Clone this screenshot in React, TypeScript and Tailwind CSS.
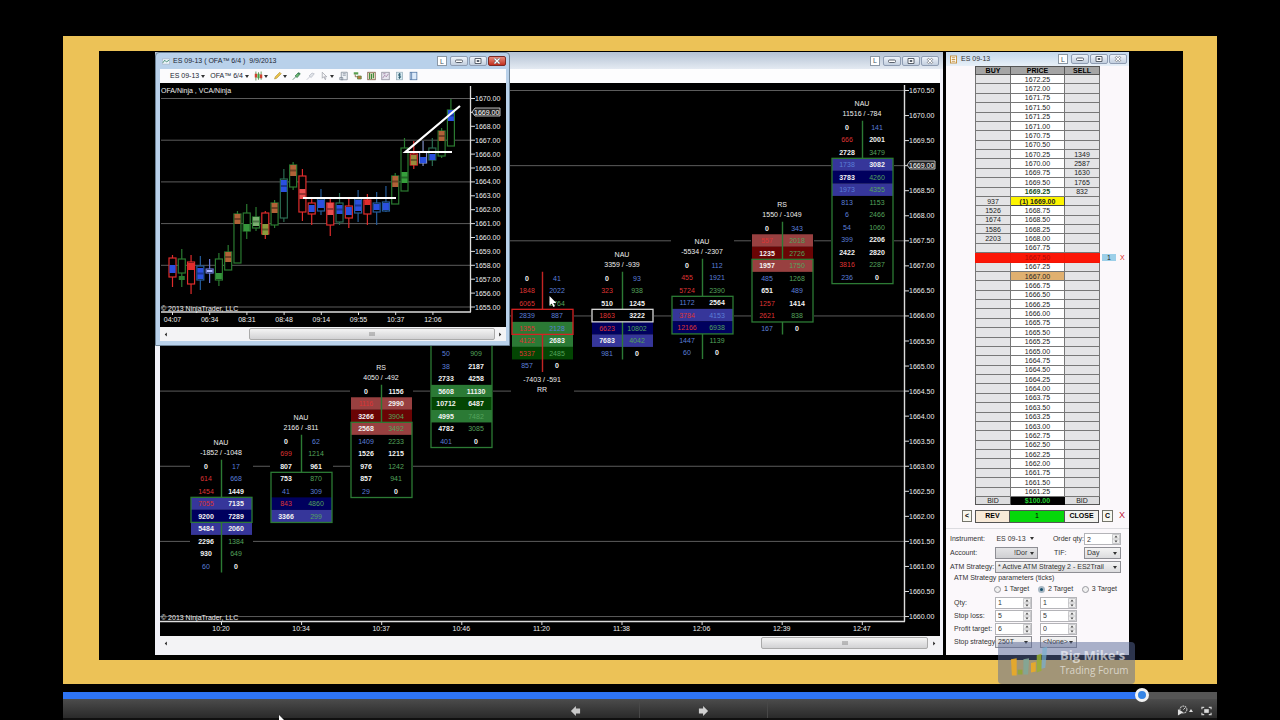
import type { ReactNode } from "react";

type Ink = "w" | "r" | "b" | "g";
type Fill = "blue" | "navy" | "rose" | "maroon" | "green" | "forest";
type Row = [string, Ink, string, Ink, Fill?];

interface Footprint {
  x: number;
  top: number;
  title?: [string, string];
  footer?: [string, string];
  line: string;
  boxColor: string;
  box: [number, number];
  rows: Row[];
}

const INK: Record<Ink, string> = { w: "#f2f2f2", r: "#de3434", b: "#5a7fd8", g: "#54a45c" };
const FILL: Record<Fill, string> = {
  blue: "#36369a",
  navy: "#00005e",
  rose: "#984040",
  maroon: "#6a0404",
  green: "#2b7a35",
  forest: "#034603",
};
const GREEN = "#2c7a34";
const STEP = 12.53;

const footprints: Footprint[] = [
  {
    x: 221, top: 466, title: ["NAU", "-1852 / -1048"], line: GREEN, boxColor: GREEN, box: [3, 4],
    rows: [
      ["0", "w", "17", "b"], ["614", "r", "668", "b"], ["1454", "r", "1449", "w"],
      ["7055", "r", "7135", "w", "blue"], ["9200", "w", "7289", "w", "navy"], ["5484", "w", "2060", "w", "blue"],
      ["2296", "w", "1384", "g"], ["930", "w", "649", "g"], ["60", "b", "0", "w"],
    ],
  },
  {
    x: 301, top: 441, title: ["NAU", "2166 / -811"], line: GREEN, boxColor: GREEN, box: [3, 6],
    rows: [
      ["0", "w", "62", "b"], ["699", "r", "1214", "g"], ["807", "w", "961", "w"], ["753", "w", "870", "g"],
      ["41", "b", "309", "b"], ["843", "r", "4860", "g", "navy"], ["3366", "w", "299", "g", "blue"],
    ],
  },
  {
    x: 381, top: 391, title: ["RS", "4050 / -492"], line: GREEN, boxColor: GREEN, box: [3, 8],
    rows: [
      ["0", "w", "1156", "w"], ["1116", "r", "2990", "w", "rose"], ["3266", "w", "3904", "g", "maroon"],
      ["2568", "w", "3492", "g", "rose"], ["1409", "b", "2233", "g"], ["1526", "w", "1215", "w"],
      ["976", "w", "1242", "g"], ["857", "w", "941", "g"], ["29", "b", "0", "w"],
    ],
  },
  {
    x: 461, top: 341, line: GREEN, boxColor: GREEN, box: [0, 8],
    rows: [
      ["12", "b", "310", "b"], ["50", "b", "909", "g"], ["38", "b", "2187", "w"], ["2733", "w", "4258", "w"],
      ["5608", "w", "11130", "w", "green"], ["10712", "w", "6487", "w", "forest"], ["4995", "w", "7482", "g", "green"],
      ["4782", "w", "3085", "g"], ["401", "b", "0", "w"],
    ],
  },
  {
    x: 542, top: 278, footer: ["-7403 / -591", "RR"], line: "#c42424", boxColor: "#d42222", box: [3, 4],
    rows: [
      ["0", "w", "41", "b"], ["1848", "r", "2022", "b"], ["6065", "r", "2764", "g"], ["2839", "b", "887", "b"],
      ["1355", "r", "2128", "b", "green"], ["4122", "r", "2683", "w", "green"], ["5337", "r", "2485", "g", "forest"],
      ["857", "b", "0", "w"],
    ],
  },
  {
    x: 622, top: 278, title: ["NAU", "3359 / -939"], line: GREEN, boxColor: "#d8d8d8", box: [3, 3],
    rows: [
      ["0", "w", "93", "b"], ["323", "r", "938", "g"], ["510", "w", "1245", "w"], ["1863", "r", "3222", "w"],
      ["6623", "r", "10802", "g", "navy"], ["7683", "w", "4042", "g", "blue"], ["981", "b", "0", "w"],
    ],
  },
  {
    x: 702, top: 265, title: ["NAU", "-5534 / -2307"], line: GREEN, boxColor: GREEN, box: [3, 5],
    rows: [
      ["0", "w", "112", "b"], ["455", "r", "1921", "b"], ["5724", "r", "2390", "g"], ["1172", "b", "2564", "w"],
      ["3784", "r", "4153", "b", "blue"], ["12166", "r", "6938", "g", "navy"], ["1447", "b", "1139", "g"],
      ["60", "b", "0", "w"],
    ],
  },
  {
    x: 782, top: 228, title: ["RS", "1550 / -1049"], line: GREEN, boxColor: GREEN, box: [3, 7],
    rows: [
      ["0", "w", "343", "b"], ["557", "r", "2018", "g", "rose"], ["1235", "w", "2726", "g", "maroon"],
      ["1957", "w", "1750", "g", "rose"], ["485", "b", "1268", "g"], ["651", "w", "489", "b"],
      ["1257", "r", "1414", "w"], ["2621", "r", "838", "g"], ["167", "b", "0", "w"],
    ],
  },
  {
    x: 862, top: 127, title: ["NAU", "11516 / -784"], line: GREEN, boxColor: GREEN, box: [3, 12],
    rows: [
      ["0", "w", "141", "b"], ["666", "r", "2001", "w"], ["2728", "w", "3479", "g"], ["1738", "b", "3082", "w", "blue"],
      ["3783", "w", "4260", "g", "navy"], ["1973", "b", "4355", "g", "blue"], ["813", "b", "1153", "g"],
      ["6", "b", "2466", "g"], ["54", "b", "1060", "g"], ["399", "b", "2206", "w"], ["2422", "w", "2820", "w"],
      ["3816", "r", "2287", "g"], ["236", "b", "0", "w"],
    ],
  },
];

function Cell({ x, y, ink, children }: { x: number; y: number; ink: Ink; children: string }) {
  return <text x={x} y={y} fill={INK[ink]} className={ink === "w" ? "font-bold" : "font-normal"}>{children}</text>;
}

function FootprintColumn({ f }: { f: Footprint }) {
  const start = f.top - STEP / 2;
  const end = start + f.rows.length * STEP;
  const boxTop = start + f.box[0] * STEP;
  const boxBottom = start + (f.box[1] + 1) * STEP;
  return (
    <g>
      <rect x={f.x - 31} y={start - (f.title ? 22 : 0)} width={63} height={end - start + (f.footer ? 24 : 0) + (f.title ? 22 : 0)} fill="#000" />
      {f.title && <text x={f.x} y={f.top - 21} textAnchor="middle" fill="#eee">{f.title[0]}</text>}
      {f.title && <text x={f.x} y={f.top - 11} textAnchor="middle" fill="#eee">{f.title[1]}</text>}
      {f.rows.map((r, i) => r[4] && (
        <rect key={i} x={f.x - 30} y={start + i * STEP} width={61} height={STEP} fill={FILL[r[4]]} />
      ))}
      <path d={`M${f.x + 0.5} ${start}V${boxTop}M${f.x + 0.5} ${boxBottom}V${Math.max(end, boxBottom)}`} stroke={f.line} strokeWidth="1.4" />
      <rect x={f.x - 30} y={boxTop} width={61} height={boxBottom - boxTop} fill="none" stroke={f.boxColor} strokeWidth="1.3" />
      {f.rows.map((r, i) => (
        <g key={i} textAnchor="middle">
          <Cell x={f.x - 15} y={f.top + i * STEP + 2.5} ink={r[1]}>{r[0]}</Cell>
          <Cell x={f.x + 15} y={f.top + i * STEP + 2.5} ink={r[3]}>{r[2]}</Cell>
        </g>
      ))}
      {f.footer?.map((t, i) => (
        <text key={t} x={f.x} y={end + 10 + i * 10} textAnchor="middle" fill="#eee">{t}</text>
      ))}
    </g>
  );
}

function PriceTag({ x, y, children }: { x: number; y: number; children: string }) {
  return (
    <g>
      <path d={`M${x} ${y}l3-4h25v8h-25z`} fill="#222" stroke="#ccc" strokeWidth="0.9" />
      <text x={x + 2} y={y + 2.5} fill="#fff">{children}</text>
    </g>
  );
}

const mainTimes = ["10:20", "10:34", "10:37", "10:46", "11:20", "11:38", "12:06", "12:39", "12:47"];

function MainChart() {
  const prices = Array.from({ length: 22 }, (_, i) => 1670.5 - i * 0.5);
  return (
    <svg viewBox="160 83 780 553" className="block h-auto w-full bg-black text-[7px]" role="img" aria-label="ES 09-13 order flow chart">
      {prices.map((p, i) => i % 3 === 0 && <path key={p} d={`M160 ${90.5 + i * 25.05}H904`} stroke="#5c5c5c" strokeWidth="1" />)}
      {footprints.map((f) => <FootprintColumn key={f.x} f={f} />)}
      <path d="M904.500 85V621.500M160 621.500H905" stroke="#ddd" strokeWidth="1.4" />
      {prices.map((p, i) => (
        <g key={p}>
          <path d={`M905 ${90.5 + i * 25.05}h4`} stroke="#ddd" />
          {p !== 1669 && <text x="909" y={93 + i * 25.05} fill="#eee">{p.toFixed(2)}</text>}
        </g>
      ))}
      <PriceTag x={907} y={165}>1669.00</PriceTag>
      {mainTimes.map((t, i) => (
        <g key={t}>
          <path d={`M${221.5 + i * 80.1} 621v4`} stroke="#ddd" />
          <text x={221 + i * 80.1} y="631" textAnchor="middle" fill="#eee">{t}</text>
        </g>
      ))}
      <text x="161" y="620" fill="#eee">© 2013 NinjaTrader, LLC</text>
      <path d="M549.500 296v9.500l2.200-1.900 1.700 3.400 1.500-.7-1.600-3.300h3z" fill="#fff" />
    </svg>
  );
}

interface Candle { c: string; wick: [number, number]; body: [number, number]; fill?: [number, number, string] }
const R = "#e02c2c";
const G = "#2a7a30";
const B = "#2a50e0";
const O = "#b06238";
const candles: Candle[] = [
  { c: R, wick: [255, 287], body: [258, 277], fill: [265, 273, B] },
  { c: G, wick: [249, 287], body: [259, 273], fill: [276, 280, G] },
  { c: R, wick: [255, 294], body: [262, 284], fill: [263, 270, R] },
  { c: "#245c9c", wick: [256, 290], body: [266, 280], fill: [268, 279, B] },
  { c: "#6a7ad8", wick: [259, 283], body: [269, 273], fill: [270, 272, "#a8b4ff"] },
  { c: G, wick: [253, 286], body: [259, 280], fill: [273, 279, "#36963c"] },
  { c: G, wick: [245, 270], body: [252, 270], fill: [252, 262, O] },
  { c: G, wick: [211, 263], body: [214, 263], fill: [214, 224, O] },
  { c: G, wick: [204, 239], body: [213, 231], fill: [224, 231, "#36963c"] },
  { c: G, wick: [207, 231], body: [217, 228], fill: [217, 226, "#7ab070"] },
  { c: R, wick: [211, 239], body: [213, 234], fill: [224, 235, "#8a9a3c"] },
  { c: G, wick: [200, 228], body: [203, 225], fill: [203, 213, O] },
  { c: "#2a6a50", wick: [169, 222], body: [179, 218], fill: [180, 192, B] },
  { c: G, wick: [162, 190], body: [165, 187], fill: [165, 176, O] },
  { c: R, wick: [169, 221], body: [176, 212], fill: [189, 199, "#e85050"] },
  { c: R, wick: [198, 225], body: [203, 214], fill: [205, 212, B] },
  { c: "#245c9c", wick: [189, 215], body: [199, 211], fill: [200, 208, B] },
  { c: R, wick: [198, 236], body: [203, 225], fill: [203, 215, "#e85050"] },
  { c: "#2a6a50", wick: [193, 225], body: [203, 222], fill: [205, 214, B] },
  { c: R, wick: [198, 228], body: [206, 218], fill: [207, 215, B] },
  { c: "#245c9c", wick: [190, 222], body: [199, 213], fill: [200, 211, B] },
  { c: R, wick: [194, 225], body: [200, 214], fill: [200, 205, R] },
  { c: "#245c9c", wick: [192, 225], body: [203, 212], fill: [204, 210, B] },
  { c: "#245c9c", wick: [186, 212], body: [202, 211], fill: [203, 210, B] },
  { c: G, wick: [173, 204], body: [176, 204], fill: [176, 187, O] },
  { c: G, wick: [138, 191], body: [148, 191], fill: [172, 183, "#36a03c"] },
  { c: R, wick: [141, 169], body: [154, 165], fill: [155, 165, "#9a8a3c"] },
  { c: "#8090c8", wick: [141, 166], body: [152, 163], fill: [157, 163, B] },
  { c: "#2a6a50", wick: [138, 166], body: [148, 160], fill: [154, 160, B] },
  { c: G, wick: [128, 158], body: [131, 156], fill: [131, 141, O] },
  { c: G, wick: [99, 146], body: [110, 146], fill: [110, 121, B] },
];
const insetTimes = ["04:07", "06:34", "08:31", "08:48", "09:14", "09:55", "10:37", "12:06"];

function InsetChart() {
  const prices = Array.from({ length: 16 }, (_, i) => 1670 - i);
  return (
    <svg viewBox="160 83 346 244" className="block h-auto w-full bg-black text-[7px]" role="img" aria-label="ES 09-13 candlestick chart">
      {prices.map((p, i) => i % 3 === 0 && <path key={p} d={`M161 ${98.5 + i * 13.9}H470`} stroke="#5c5c5c" />)}
      {candles.map((k, i) => {
        const x = 172.5 + i * 9.28;
        return (
          <g key={i}>
            <path d={`M${x} ${k.wick[0]}V${k.wick[1]}`} stroke={k.c} strokeWidth="1.2" />
            <rect x={x - 3.5} y={k.body[0]} width="7" height={k.body[1] - k.body[0]} fill="#000" stroke={k.c} strokeWidth="1.2" />
            {k.fill && <rect x={x - 3} y={k.fill[0]} width="6" height={k.fill[1] - k.fill[0]} fill={k.fill[2]} />}
            {k.fill && k.fill[1] - k.fill[0] > 8 && <path d={`M${x - 3} ${(k.fill[0] + k.fill[1]) / 2}h6`} stroke="#000" strokeOpacity="0.35" strokeWidth="2" />}
          </g>
        );
      })}
      <path d="M303 198H396M452 152H405.500L460 106" fill="none" stroke="#fff" strokeWidth="2.2" />
      <path d="M470.500 86V312M161 312H471" stroke="#ddd" strokeWidth="1.3" />
      {prices.map((p, i) => (
        <g key={p}>
          <path d={`M471 ${98.5 + i * 13.9}h4`} stroke="#ddd" />
          {p !== 1669 && <text x="475" y={101 + i * 13.9} fill="#eee">{p.toFixed(2)}</text>}
        </g>
      ))}
      <PriceTag x={472} y={112}>1669.00</PriceTag>
      {insetTimes.map((t, i) => (
        <g key={t}>
          <path d={`M${172.5 + i * 37.2} 312v3`} stroke="#ddd" />
          <text x={172.5 + i * 37.2} y="322" textAnchor="middle" fill="#eee">{t}</text>
        </g>
      ))}
      <text x="161" y="93" fill="#eee">OFA/Ninja , VCA/Ninja</text>
      <text x="161" y="311" fill="#eee">© 2013 NinjaTrader, LLC</text>
    </svg>
  );
}

function WindowButtons({ danger = false }: { danger?: boolean }) {
  const base = "flex h-[10px] w-[18px] items-center justify-center rounded-[2px] border border-[#8f9db3] bg-gradient-to-b from-[#eef3fa] to-[#c3cfdf]";
  return (
    <div className="flex items-center gap-px">
      <button aria-label="Link window" className="mr-[2px] flex h-[10px] w-[10px] items-center justify-center border border-[#8b98a6] bg-white text-[7px] leading-none text-[#456]">L</button>
      <button aria-label="Minimize" className={base}>
        <svg viewBox="0 0 10 8" className="h-2 w-[10px]"><rect x="1.500" y="3" width="7" height="2.500" rx="1" fill="#fff" stroke="#59616d" /></svg>
      </button>
      <button aria-label="Maximize" className={base}>
        <svg viewBox="0 0 10 8" className="h-2 w-[10px]"><path d="M2 1.500h6v5H2zM4 3.500h2v1H4z" fill="#fff" stroke="#59616d" /></svg>
      </button>
      <button aria-label="Close" className={danger ? "flex h-[10px] w-[18px] items-center justify-center rounded-[2px] border border-[#7a2a24] bg-gradient-to-b from-[#e58a7c] to-[#c22c1c]" : base}>
        <svg viewBox="0 0 10 8" className="h-2 w-[10px]">
          <path d="M2.500 1.500l5 5M7.500 1.500l-5 5" stroke="#59616d" strokeWidth="2.400" />
          <path d="M2.500 1.500l5 5M7.500 1.500l-5 5" stroke="#fff" strokeWidth="1.200" />
        </svg>
      </button>
    </div>
  );
}

function ScrollBar({ thumb, lead }: { thumb: string; lead: string }) {
  return (
    <div className="flex h-[14px] items-center bg-[#f3f3f5] px-1">
      <svg viewBox="0 0 4 6" className="h-[5px] w-1"><path d="M3 0.500v5L0.500 3z" fill="#222" /></svg>
      <div className={lead} />
      <div className={thumb}>
        <svg viewBox="0 0 6 4" className="h-1 w-[6px]"><path d="M1 0v4M3 0v4M5 0v4" stroke="#777" strokeWidth="0.800" /></svg>
      </div>
      <svg viewBox="0 0 4 6" className="ml-auto h-[5px] w-1"><path d="M1 0.500v5L3.500 3z" fill="#222" /></svg>
    </div>
  );
}

const toolIcons: { name: string; art: ReactNode; caret?: boolean }[] = [
  {
    name: "Bar style",
    caret: true,
    art: (
      <g>
        <path d="M2.500 0v12M6 1v10M9.500 0v11" stroke="#3c7a2c" strokeWidth="1" />
        <path d="M1 3h3v5H1zM8 4h3v5H8z" fill="#d04030" />
        <path d="M4.500 3h3v6h-3z" fill="#48a040" />
      </g>
    ),
  },
  { name: "Draw", caret: true, art: <path d="M2 10l1-3 6-6 2 2-6 6z" fill="#e8c24a" stroke="#a8862c" strokeWidth="0.700" /> },
  { name: "Zoom in", art: <path d="M1 11l4-4M4 6l4-4 3 1-4 5zM9 1v3M7.500 2.500h3" fill="#6cb870" stroke="#3e7c58" /> },
  { name: "Zoom out", art: <path d="M1 11l4-4M4 6l4-4 3 1-4 5z" fill="#e0e3e8" stroke="#b8bec8" /> },
  { name: "Cursor", caret: true, art: <path d="M3 1v8l2-2 2 4 1-1-2-3h3z" fill="#f6f6f8" stroke="#8b8f98" strokeWidth="0.800" /> },
  { name: "Chart trader", art: <path d="M3 1h8v10H3zM5 3h4M5 5h4M1 8h4v3H1z" fill="#eef2f7" stroke="#7b8794" /> },
  { name: "Strategies", art: <g><path d="M1 1h6v3H1z" fill="#58a050" /><path d="M3 4v3h6" fill="none" stroke="#785030" /><path d="M6 6h5v4H6z" fill="#c07840" stroke="#5a8a40" /></g> },
  { name: "Indicators", art: <g><rect x="1" y="1" width="10" height="10" fill="#f2e2d0" stroke="#785840" /><path d="M3.500 2v8M6 3v7M8.500 2v7" stroke="#3a8a38" strokeWidth="1.500" /></g> },
  { name: "Properties", art: <g><rect x="1" y="1" width="10" height="10" fill="#e6e6ee" stroke="#8a8a98" /><path d="M2 9l3-4 2 2 3-4M3 3h3" fill="none" stroke="#987098" /></g> },
  { name: "Account", art: <g><rect x="2" y="1" width="8" height="10" fill="#d8eaf2" stroke="#98b0bc" /><path d="M8 3.500H5v2.300h2.500V8H4.500M6 2v8" fill="none" stroke="#2a5a6c" /></g> },
  { name: "Data box", art: <g><rect x="1.500" y="1" width="9" height="10" fill="#dceafa" stroke="#4a70a0" /><path d="M3.500 1v10" stroke="#4a70a0" /></g> },
];

function Caret() {
  return <svg viewBox="0 0 4 3" className="h-[3px] w-1 shrink-0"><path d="M0 0h4L2 3z" fill="#333" /></svg>;
}

function InsetWindow() {
  return (
    <section className="absolute top-0 left-0 w-[355px] rounded-t-[4px] border border-[#6d8295] bg-[#b9d1ea] pr-[3px] pb-1 pl-1 text-[7px] text-[#202632]">
      <header className="flex h-4 items-center gap-[3px] pl-[2px]">
        <svg viewBox="0 0 9 7" className="h-[7px] w-[8px]"><path d="M.5.5h8v6h-8z" fill="#edf4fb" stroke="#9aa8b8" strokeWidth="0.600" /><path d="M1 5l2-3 2 2 3-2" fill="none" stroke="#3c8a6c" /></svg>
        <h2>ES 09-13 ( OFA™ 6/4 )&nbsp; 9/9/2013</h2>
        <div className="ml-auto"><WindowButtons danger /></div>
      </header>
      <div className="flex h-[14px] items-center gap-[5px] bg-[#fbfbfd] pl-[10px]">
        <button className="flex items-center gap-[2px]">ES 09-13 <Caret /></button>
        <button className="flex items-center gap-[2px]">OFA™ 6/4 <Caret /></button>
        <div className="flex items-center gap-[5px]">
          {toolIcons.map((t) => (
            <button key={t.name} aria-label={t.name} className="flex items-center gap-px">
              <svg viewBox="0 0 12 12" className="h-[10px] w-[9px] shrink-0">{t.art}</svg>
              {t.caret && <Caret />}
            </button>
          ))}
        </div>
      </div>
      <InsetChart />
      <ScrollBar lead="w-[81px]" thumb="flex h-3 w-[246px] items-center justify-center rounded-[2px] border border-[#aaa] bg-gradient-to-b from-[#f4f4f4] to-[#d2d2d4]" />
    </section>
  );
}

const asks: Record<string, string> = { "1670.25": "1349", "1670.00": "2587", "1669.75": "1630", "1669.50": "1765", "1669.25": "832" };
const bids: Record<string, string> = { "1669.00": "937", "1668.75": "1526", "1668.50": "1674", "1668.25": "1586", "1668.00": "2203" };
const ladder = Array.from({ length: 45 }, (_, i) => (1672.25 - i * 0.25).toFixed(2));

function priceClass(p: string) {
  if (p === "1669.00") return "border border-[#444] bg-[#fdf400] font-bold";
  if (p === "1669.25") return "border border-[#777] bg-white font-bold text-[#14501c]";
  if (p === "1667.50") return "border border-[#f41404] bg-[#fb1606] text-[#a80a04]";
  if (p === "1667.00") return "border border-[#777] bg-[#e0b070]";
  return "border border-[#777] bg-white";
}

function Ladder() {
  return (
    <table className="ml-[29px] h-[439px] w-[152px] table-fixed border-collapse text-center text-[7px] leading-[7px] text-[#222] [&_td]:p-0 [&_th]:p-0">
      <colgroup><col className="w-[35px]" /><col className="w-[54px]" /><col className="w-[35px]" /><col className="w-[28px]" /></colgroup>
      <thead>
        <tr>
          {["BUY", "PRICE", "SELL"].map((h) => <th key={h} scope="col" className="border border-[#555] bg-[#a4a4a4] font-bold text-black">{h}</th>)}
          <td />
        </tr>
      </thead>
      <tbody>
        {ladder.map((p) => {
          const stop = p === "1667.50";
          const side = stop ? "border border-[#f41404] bg-[#fb1606]" : "border border-[#777] bg-[#e4e4e6]";
          return (
            <tr key={p}>
              <td className={side}>{bids[p]}</td>
              <td className={priceClass(p)}>{p === "1669.00" ? "(1) 1669.00" : p}</td>
              <td className={side}>{asks[p]}</td>
              <td>
                {stop && (
                  <div className="flex items-center gap-1 pl-[2px]">
                    <span className="w-[14px] bg-[#9ccfe8]">1</span>
                    <button aria-label="Cancel stop order" className="text-[#d22]">X</button>
                  </div>
                )}
              </td>
            </tr>
          );
        })}
      </tbody>
      <tfoot>
        <tr>
          <td className="border border-[#555] bg-[#dcdcde]">BID</td>
          <td className="border border-black bg-black font-bold text-[#22d030]">$100.00</td>
          <td className="border border-[#555] bg-[#dcdcde]">BID</td>
          <td />
        </tr>
      </tfoot>
    </table>
  );
}

function Choice({ id, label, value, frame }: { id: string; label: string; value: string; frame: string }) {
  return (
    <div className={frame}>
      <select id={id} aria-label={label} className="h-full w-full appearance-none bg-transparent pl-[2px] outline-none"><option>{value}</option></select>
      <span className="pointer-events-none absolute top-1 right-[3px]"><Caret /></span>
    </div>
  );
}

function Stepper({ id, label, value }: { id: string; label: string; value: string }) {
  return (
    <div className="flex h-[12px] w-[37px] items-center border border-[#b4b4b8] bg-white">
      <input id={id} aria-label={label} defaultValue={value} className="h-full w-full min-w-0 bg-transparent pl-[2px] outline-none" />
      <svg viewBox="0 0 8 10" className="h-[10px] w-2 shrink-0"><path d="M0.500 0.500h7v9h-7zM0.500 5h7" fill="#eee" stroke="#b8b8bc" strokeWidth="0.700" /><path d="M4 1.500l1.500 2h-3zM4 8.500l1.500-2h-3z" fill="#444" /></svg>
    </div>
  );
}

const selectFrame = "relative h-[12px] border border-[#8e8e94] bg-gradient-to-b from-[#f4f4f4] to-[#dcdcde]";

function OrderForm() {
  const lines: [string, string, string][] = [["Qty:", "1", "1"], ["Stop loss:", "5", "5"], ["Profit target:", "6", "0"]];
  return (
    <form className="mt-[5px] flex flex-col gap-[2px] border-t border-[#dcdce0] pt-1 pr-2 pl-1 text-[7px] leading-[10px] text-[#333]">
      <div className="flex h-[12px] items-center">
        <label htmlFor="instrument" className="w-[45px]">Instrument:</label>
        <Choice id="instrument" label="Instrument" value="ES 09-13" frame="relative h-[12px] w-[43px]" />
        <label htmlFor="order-qty" className="ml-4 whitespace-nowrap">Order qty:</label>
        <div className="ml-auto"><Stepper id="order-qty" label="Order quantity" value="2" /></div>
      </div>
      <div className="flex h-[12px] items-center">
        <label htmlFor="account" className="w-[45px]">Account:</label>
        <div className="relative h-[12px] w-[43px] border border-[#8e8e94] bg-gradient-to-b from-[#e4e4e6] to-[#cfcfd2]">
          <select id="account" className="h-full w-full appearance-none bg-transparent pl-[18px] outline-none"><option>!Dor</option></select>
          <span className="pointer-events-none absolute top-1 right-[3px]"><Caret /></span>
        </div>
        <label htmlFor="tif" className="ml-4">TIF:</label>
        <div className="ml-auto w-[37px]"><Choice id="tif" label="Time in force" value="Day" frame={selectFrame} /></div>
      </div>
      <div className="flex h-[12px] items-center">
        <label htmlFor="atm" className="w-[45px] whitespace-nowrap">ATM Strategy:</label>
        <div className="flex-1"><Choice id="atm" label="ATM strategy" value="* Active ATM Strategy 2 - ES2Trail" frame={selectFrame} /></div>
      </div>
      <fieldset className="pl-1">
        <legend className="flex h-[6px] items-center">ATM Strategy parameters (ticks)</legend>
        <div className="mt-px flex h-[14px] items-center justify-between pr-1 pl-10">
          {["1 Target", "2 Target", "3 Target"].map((t) => (
            <label key={t} className="flex items-center gap-[3px]">
              <input type="radio" name="targets" defaultChecked={t === "2 Target"} className="h-[7px] w-[7px] appearance-none rounded-full border border-[#98989e] bg-[#f0f0f0] checked:border-2 checked:border-[#a9b8c4] checked:bg-[#17506e]" />
              {t}
            </label>
          ))}
        </div>
        {lines.map(([name, a, b]) => (
          <div key={name} className="flex h-[13px] items-center">
            <label htmlFor={name + "1"} className="w-[41px] whitespace-nowrap">{name}</label>
            <Stepper id={name + "1"} label={name + " target 1"} value={a} />
            <span className="w-2" />
            <Stepper id={name + "2"} label={name + " target 2"} value={b} />
          </div>
        ))}
        <div className="flex h-[13px] items-center">
          <label htmlFor="stop1" className="w-[41px] whitespace-nowrap">Stop strategy:</label>
          <div className="w-[37px]"><Choice id="stop1" label="Stop strategy 1" value="250T" frame={selectFrame} /></div>
          <span className="w-2" />
          <div className="w-[37px]"><Choice id="stop2" label="Stop strategy 2" value="<None>" frame={selectFrame} /></div>
        </div>
      </fieldset>
    </form>
  );
}

function DomWindow() {
  return (
    <section className="flex w-[183px] shrink-0 flex-col bg-[#fbf8fb] text-[7px] text-[#333]">
      <header className="flex h-[14px] items-center gap-1 bg-gradient-to-b from-[#c4d8ec] to-[#e8f0f8] pr-[2px] pl-1">
        <svg viewBox="0 0 8 9" className="h-[9px] w-[7px]"><rect x=".5" y=".5" width="7" height="8" fill="#fff" stroke="#c08a30" /><path d="M2 2.500h4M2 4.500h4M2 6.500h4" stroke="#c08a30" /></svg>
        <h2>ES 09-13</h2>
        <div className="ml-auto"><WindowButtons /></div>
      </header>
      <Ladder />
      <div className="mt-1 ml-4 flex h-[14px] items-center font-bold text-black">
        <button className="mr-[3px] h-3 w-[10px] border border-[#74746a] bg-[#f7f7ee]">&lt;</button>
        <button className="h-[13px] w-[35px] border border-[#555] bg-[#f8ead8]">REV</button>
        <button className="h-[13px] w-[54px] border-y border-[#555] bg-[#06d80a] font-normal">1</button>
        <button className="h-[13px] w-[35px] border border-[#555] bg-[#f2f2ee]">CLOSE</button>
        <button className="ml-[3px] h-3 w-[11px] border border-[#74746a] bg-[#f7f7ee]">C</button>
        <button aria-label="Close position" className="ml-[6px] text-[9px] font-normal text-[#c02040]">X</button>
      </div>
      <OrderForm />
    </section>
  );
}

function Watermark() {
  return (
    <div className="absolute right-[82px] bottom-0 flex h-[42px] w-[137px] items-center gap-2 rounded-[4px] bg-[#586898]/50 pl-3 font-['Open_Sans',sans-serif] text-white/60">
      <svg viewBox="0 0 44 36" className="h-9 w-[42px] shrink-0">
        <path d="M1 14l6-1v18H2z" fill="#f0ac20" opacity=".85" />
        <path d="M8 25h5v5H8z" fill="#90a830" opacity=".85" />
        <path d="M14 14l6-1-1 17h-5z" fill="#80a898" opacity=".85" />
        <path d="M22 18l5-1v10l-5 1z" fill="#f0ac20" opacity=".85" />
        <path d="M28 10l5-2v18l-5 2z" fill="#98b030" opacity=".85" />
        <path d="M34 2l5-1-2 22-4 1z" fill="#78b0d0" opacity=".7" />
      </svg>
      <p className="text-[10px] leading-[15px] whitespace-nowrap"><strong className="block text-[13px]">Big Mike's</strong>Trading Forum</p>
    </div>
  );
}

function Player() {
  const arrow = "M0 6l6-6v3h5v6H6v3z";
  return (
    <footer className="relative mt-2 bg-[#101010] pb-[2px]">
      <input
        type="range"
        aria-label="Seek"
        defaultValue={94}
        min={0}
        max={100}
        className="relative z-10 block h-[7px] w-full appearance-none bg-transparent outline-none [&::-webkit-slider-runnable-track]:h-[7px] [&::-webkit-slider-runnable-track]:bg-[linear-gradient(to_right,#2e74f4_93.5%,#555_93.5%)] [&::-webkit-slider-thumb]:-mt-1 [&::-webkit-slider-thumb]:h-[14px] [&::-webkit-slider-thumb]:w-[14px] [&::-webkit-slider-thumb]:appearance-none [&::-webkit-slider-thumb]:rounded-full [&::-webkit-slider-thumb]:border-[3px] [&::-webkit-slider-thumb]:border-[#f2f2f2] [&::-webkit-slider-thumb]:bg-[#3585e6]"
      />
      <div className="grid h-[19px] grid-cols-[1fr_256px_1fr] items-stretch bg-gradient-to-b from-[#4c4c4c] to-[#2a2a2a]">
        <span />
        <div className="grid grid-cols-2 border-r border-[#484848]">
          <button aria-label="Previous" className="flex items-center justify-center border-r border-[#484848] pt-1"><svg viewBox="0 0 11 12" className="h-[10px] w-[11px]"><path d={arrow} fill="#c8c8c8" /></svg></button>
          <button aria-label="Next" className="flex items-center justify-center pt-1"><svg viewBox="0 0 11 12" className="h-[10px] w-[11px] rotate-180"><path d={arrow} fill="#d0d0d0" /></svg></button>
        </div>
        <div className="flex items-center justify-end gap-2 pt-1 pr-[5px]">
          <button aria-label="Playback speed" className="flex items-center gap-px">
            <svg viewBox="0 0 12 12" className="h-[11px] w-[11px]"><circle cx="7" cy="5" r="3.800" fill="none" stroke="#bbb" strokeWidth="1.200" strokeDasharray="2 .7" /><path d="M7 5l2-2" stroke="#ddd" /><path d="M1 4.500l6 3.500-6 3.500z" fill="#e0e0e0" /></svg>
            <svg viewBox="0 0 4 3" className="h-[3px] w-1"><path d="M0 3h4L2 0z" fill="#ddd" /></svg>
          </button>
          <button aria-label="Full screen"><svg viewBox="0 0 12 10" className="block h-[10px] w-[11px]"><rect x="3.500" y="3" width="5" height="4" fill="#ddd" /><path d="M1 3V1h2.500M8.500 1H11v2M11 7v2H8.500M3.500 9H1V7" fill="none" stroke="#ccc" strokeWidth="1.300" /></svg></button>
        </div>
      </div>
      <svg viewBox="0 0 5 5" className="absolute bottom-0 left-[216px] h-[5px] w-[5px]"><path d="M0 0l5 5H0z" fill="#fff" /></svg>
    </footer>
  );
}

export default function App() {
  return (
    <main className="flex min-h-screen flex-col bg-black px-[63px] pt-9 font-['Liberation_Sans',Arial,sans-serif]">
      <div className="relative bg-[#ecc257] pt-[15px] pr-[34px] pb-6 pl-9">
        <div className="bg-black pt-px pr-[54px] pb-[5px] pl-14">
          <div className="relative flex gap-[3px]">
            <section className="flex min-w-0 flex-1 flex-col bg-[#f1f1f8] pr-[3px] pb-[5px] pl-[5px]">
              <header className="-mr-[3px] -ml-[5px] flex h-[17px] items-center justify-end bg-gradient-to-b from-[#b4c2d4] to-[#e4eaf2] pr-1"><WindowButtons /></header>
              <div className="h-[14px] bg-[#fdfdfe]" />
              <MainChart />
              <ScrollBar lead="flex-1" thumb="mr-1 flex h-3 w-[167px] items-center justify-center rounded-[2px] border border-[#aaa] bg-gradient-to-b from-[#f4f4f4] to-[#d2d2d4]" />
            </section>
            <DomWindow />
            <InsetWindow />
          </div>
        </div>
        <Watermark />
      </div>
      <Player />
    </main>
  );
}
